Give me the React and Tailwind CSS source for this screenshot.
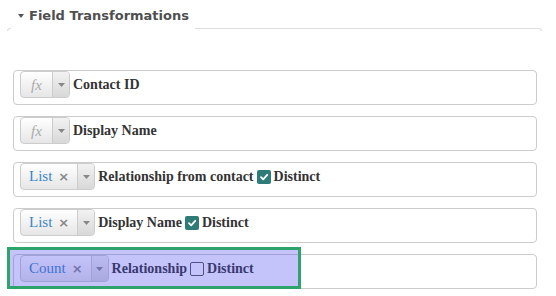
const ROWS = [
  { kind: "fx", label: "Contact ID" },
  { kind: "fx", label: "Display Name" },
  { kind: "List", label: "Relationship from contact", distinct: true },
  { kind: "List", label: "Display Name", distinct: true },
  { kind: "Count", label: "Relationship", distinct: false, highlight: true },
];

function Caret() {
  return (
    <svg width="7" height="4" viewBox="0 0 7 4" className="block">
      <path d="M0 0 L7 0 L3.5 4 Z" fill="#888" />
    </svg>
  );
}

function FnButton({ kind }) {
  return (
    <div className="flex h-[27px] shrink-0 rounded-[4px] border border-[#ccc] bg-gradient-to-b from-white to-[#e6e6e6] shadow-[inset_0_1px_0_rgba(255,255,255,0.6)]">
      {kind === "fx" ? (
        <span className="flex w-[31px] items-center justify-center pt-[1px] text-[15px] italic text-[#aaa] [font-family:'Liberation_Serif',serif]">
          fx
        </span>
      ) : (
        <span className="flex items-center pl-[8px] pr-[8px] text-[15px] text-[#3a87c8] [font-family:'Liberation_Serif',serif]">
          {kind}
          <span className="ml-[6px] text-[13px] font-bold text-[#888] [font-family:'DejaVu_Sans',sans-serif]">
            ×
          </span>
        </span>
      )}
      <span className="flex w-[17px] items-center justify-center border-l border-[#ccc] bg-gradient-to-b from-[#f2f2f2] to-[#d8d8d8] rounded-r-[3px]">
        <Caret />
      </span>
    </div>
  );
}

function Check({ on }) {
  if (on) {
    return (
      <span className="mx-[3px] inline-flex h-[14px] w-[14px] items-center justify-center rounded-[2px] bg-[#2e7b78]">
        <svg width="10" height="10" viewBox="0 0 10 10">
          <path d="M2 5.2 L4.2 7.3 L8.2 2.8" stroke="#fff" strokeWidth="1.8" fill="none" strokeLinecap="round" strokeLinejoin="round" />
        </svg>
      </span>
    );
  }
  return <span className="mx-[3px] inline-block h-[14px] w-[14px] rounded-[2px] border-[1.5px] border-[#555] bg-white" />;
}

function Row({ row }) {
  return (
    <div className="relative h-[35px] rounded-[4px] border border-[#ccc] bg-white">
      <div className="flex items-center gap-[3px] pl-[6px]">
        <FnButton kind={row.kind} />
        <div className="flex items-center text-[14px] font-bold text-[#333] [font-family:'Liberation_Serif',serif]">
          <span>{row.label}</span>
          {row.distinct !== undefined && (
            <>
              <Check on={row.distinct} />
              <span>Distinct</span>
            </>
          )}
        </div>
      </div>
      {row.highlight && (
        <div className="absolute left-[-7px] top-[-8px] h-[42px] w-[294px] border-[3px] border-[#2ea36b] bg-[rgba(70,70,240,0.32)]" />
      )}
    </div>
  );
}

export default function App() {
  return (
    <div className="h-[296px] w-[556px] overflow-hidden bg-white">
      <div className="ml-[7px] w-[535px]">
        {/* header: legend with the top rule on either side */}
        <div className="flex h-[31px] items-end">
          <div className="h-[3px] w-[4px] rounded-tl-[4px] border-l border-t border-[#ddd]" />
          <div className="flex self-start items-center gap-[5px] pl-[7px] pr-[6px] pt-[6px]">
            <svg width="6" height="4" viewBox="0 0 6 4" className="mt-[1px]">
              <path d="M0 0 L6 0 L3 4 Z" fill="#555" />
            </svg>
            <span className="text-[13px] font-bold text-[#4f4f4f] [font-family:'DejaVu_Sans',sans-serif]">
              Field Transformations
            </span>
          </div>
          <div className="h-[3px] flex-1 rounded-tr-[4px] border-r border-t border-[#ddd]" />
        </div>
        <div className="flex flex-col gap-[11px] pl-[6px] pr-[5px] pt-[39px]">
          {ROWS.map((r, i) => (
            <Row key={i} row={r} />
          ))}
        </div>
      </div>
    </div>
  );
}
